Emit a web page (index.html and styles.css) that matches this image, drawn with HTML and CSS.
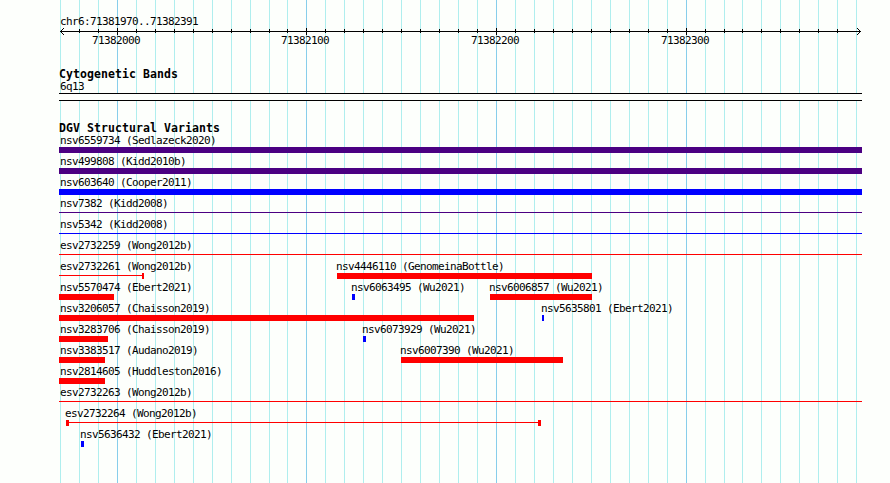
FILE: index.html
```
<!DOCTYPE html>
<html lang="en">
<head>
<meta charset="utf-8">
<title>chr6:71381970..71382391</title>
<link rel="stylesheet" href="styles.css">
</head>
<body>
<main class="browser">
  <svg class="gridlines" width="890" height="483" shape-rendering="crispEdges" aria-hidden="true">
    <path class="minor" d="M60.5 0V483M79.5 0V483M98.5 0V483M136.5 0V483M155.5 0V483M174.5 0V483M193.5 0V483M212.5 0V483M231.5 0V483M250.5 0V483M269.5 0V483M287.5 0V483M325.5 0V483M344.5 0V483M363.5 0V483M382.5 0V483M401.5 0V483M420.5 0V483M439.5 0V483M458.5 0V483M477.5 0V483M515.5 0V483M534.5 0V483M553.5 0V483M572.5 0V483M591.5 0V483M610.5 0V483M629.5 0V483M648.5 0V483M667.5 0V483M705.5 0V483M724.5 0V483M742.5 0V483M761.5 0V483M780.5 0V483M799.5 0V483M818.5 0V483M837.5 0V483M856.5 0V483"/>
    <path class="major" d="M117.5 0V483M306.5 0V483M496.5 0V483M686.5 0V483"/>
  </svg>

  <section class="ruler">
    <div class="label">chr6:71381970..71382391</div>
    <svg class="axis" width="803" height="7" viewBox="59 28 803 7" shape-rendering="crispEdges" aria-hidden="true">
      <path d="M60 31.5H861M79.5 29V33M98.5 29V33M136.5 29V33M155.5 29V33M174.5 29V33M193.5 29V33M212.5 29V33M231.5 29V33M250.5 29V33M269.5 29V33M287.5 29V33M325.5 29V33M344.5 29V33M363.5 29V33M382.5 29V33M401.5 29V33M420.5 29V33M439.5 29V33M458.5 29V33M477.5 29V33M515.5 29V33M534.5 29V33M553.5 29V33M572.5 29V33M591.5 29V33M610.5 29V33M629.5 29V33M648.5 29V33M667.5 29V33M705.5 29V33M724.5 29V33M742.5 29V33M761.5 29V33M780.5 29V33M799.5 29V33M818.5 29V33M837.5 29V33M117.5 28V35M306.5 28V35M496.5 28V35M686.5 28V35"/>
      <path d="M61 30.5H62M62 29.5H63M63 28.5H64M61 32.5H62M62 33.5H63M63 34.5H64M859 30.5H860M858 29.5H859M857 28.5H858M859 32.5H860M858 33.5H859M857 34.5H858"/>
    </svg>
    <div class="numbers">
      <span class="label at" style="--x:33">71382000</span>
      <span class="label at" style="--x:222">71382100</span>
      <span class="label at" style="--x:412">71382200</span>
      <span class="label at" style="--x:602">71382300</span>
    </div>
  </section>

  <section class="cytobands">
    <h2>Cytogenetic Bands</h2>
    <div class="label">6q13</div>
    <div class="band"></div>
  </section>

  <section class="variants">
    <h2>DGV Structural Variants</h2>
    <div class="row"><div class="feature"><span class="label">nsv6559734 (Sedlazeck2020)</span><i class="bar indigo" style="--w:803"></i></div></div>
    <div class="row"><div class="feature"><span class="label">nsv499808 (Kidd2010b)</span><i class="bar indigo" style="--w:803"></i></div></div>
    <div class="row"><div class="feature"><span class="label">nsv603640 (Cooper2011)</span><i class="bar blue" style="--w:803"></i></div></div>
    <div class="row"><div class="feature"><span class="label">nsv7382 (Kidd2008)</span><i class="line indigo" style="--w:803"></i></div></div>
    <div class="row"><div class="feature"><span class="label">nsv5342 (Kidd2008)</span><i class="line blue" style="--w:803"></i></div></div>
    <div class="row"><div class="feature"><span class="label">esv2732259 (Wong2012b)</span><i class="line red" style="--w:803"></i></div></div>
    <div class="row">
      <div class="feature"><span class="label">esv2732261 (Wong2012b)</span><span class="span"><i class="line red" style="--w:83"></i><i class="bar red" style="--w:2"></i></span></div>
      <div class="feature" style="--x:278"><span class="label flush">nsv4446110 (GenomeinaBottle)</span><i class="bar red" style="--w:255"></i></div>
    </div>
    <div class="row">
      <div class="feature"><span class="label">nsv5570474 (Ebert2021)</span><i class="bar red" style="--w:55"></i></div>
      <div class="feature" style="--x:293"><span class="label flush">nsv6063495 (Wu2021)</span><i class="bar blue" style="--w:3"></i></div>
      <div class="feature" style="--x:431"><span class="label flush">nsv6006857 (Wu2021)</span><i class="bar red" style="--w:102"></i></div>
    </div>
    <div class="row">
      <div class="feature"><span class="label">nsv3206057 (Chaisson2019)</span><i class="bar red" style="--w:415"></i></div>
      <div class="feature" style="--x:483"><span class="label flush">nsv5635801 (Ebert2021)</span><i class="bar blue" style="--w:2"></i></div>
    </div>
    <div class="row">
      <div class="feature"><span class="label">nsv3283706 (Chaisson2019)</span><i class="bar red" style="--w:49"></i></div>
      <div class="feature" style="--x:304"><span class="label flush">nsv6073929 (Wu2021)</span><i class="bar blue" style="--w:3"></i></div>
    </div>
    <div class="row">
      <div class="feature"><span class="label">nsv3383517 (Audano2019)</span><i class="bar red" style="--w:46"></i></div>
      <div class="feature" style="--x:342"><span class="label flush">nsv6007390 (Wu2021)</span><i class="bar red" style="--w:162"></i></div>
    </div>
    <div class="row"><div class="feature"><span class="label">nsv2814605 (Huddleston2016)</span><i class="bar red" style="--w:46"></i></div></div>
    <div class="row"><div class="feature"><span class="label">esv2732263 (Wong2012b)</span><i class="line red" style="--w:803"></i></div></div>
    <div class="row"><div class="feature" style="--x:7"><span class="label flush">esv2732264 (Wong2012b)</span><span class="span"><i class="bar red" style="--w:3"></i><i class="line red" style="--w:469"></i><i class="bar red" style="--w:3"></i></span></div></div>
    <div class="row"><div class="feature" style="--x:22"><span class="label flush">nsv5636432 (Ebert2021)</span><i class="bar blue" style="--w:3"></i></div></div>
  </section>
</main>
</body>
</html>
```
FILE: styles.css
```
* { box-sizing: border-box; }

body {
  margin: 0;
  background: #fdfffc;
  color: #000;
  font: 11px/12px "DejaVu Sans Mono", monospace;
  overflow: hidden;
}

.browser {
  width: 890px;
  height: 483px;
  padding: 15px 28px 0 59px;
  isolation: isolate;
}

.gridlines {
  position: absolute;
  inset: 0;
  z-index: -1;
}

.gridlines path { fill: none; stroke-width: 1; }
.minor { stroke: #afeeee; }
.major { stroke: #87ceeb; }

.label {
  display: block;
  height: 12px;
  padding: 1px 0 0 1px;
  letter-spacing: -0.622px;
  white-space: nowrap;
}

.label.flush { padding-left: 0; margin-left: -1px; }

.axis { display: block; margin-top: 1px; }
.axis path { fill: none; stroke: #000; stroke-width: 1; }

.numbers { display: grid; margin-top: -1px; }

.at,
.feature {
  grid-area: 1 / 1;
  margin-left: calc(var(--x, 0) * 1px);
}

.label.at { padding-left: 0; }

h2 {
  margin: 0;
  height: 12px;
  font-size: 11.5px;
  line-height: 12px;
  letter-spacing: 0.077px;
  white-space: pre;
}

.cytobands { margin-top: 22px; }

.band {
  width: 803px;
  height: 8px;
  margin-top: 1px;
  border: solid #000;
  border-width: 1px 0;
  background: #fdfffc;
}

.variants { margin-top: 21px; }

.row {
  display: grid;
  grid-template-columns: 803px;
  height: 21px;
}

.row .label { height: 13px; }

.span { display: flex; }

.bar,
.line {
  display: block;
  width: calc(var(--w) * 1px);
  flex: none;
}

.bar { height: 6px; }
.line { height: 1px; margin-top: 2px; }

.indigo { background: #4b0082; }
.blue { background: #0000ff; }
.red { background: #ff0000; }
```
